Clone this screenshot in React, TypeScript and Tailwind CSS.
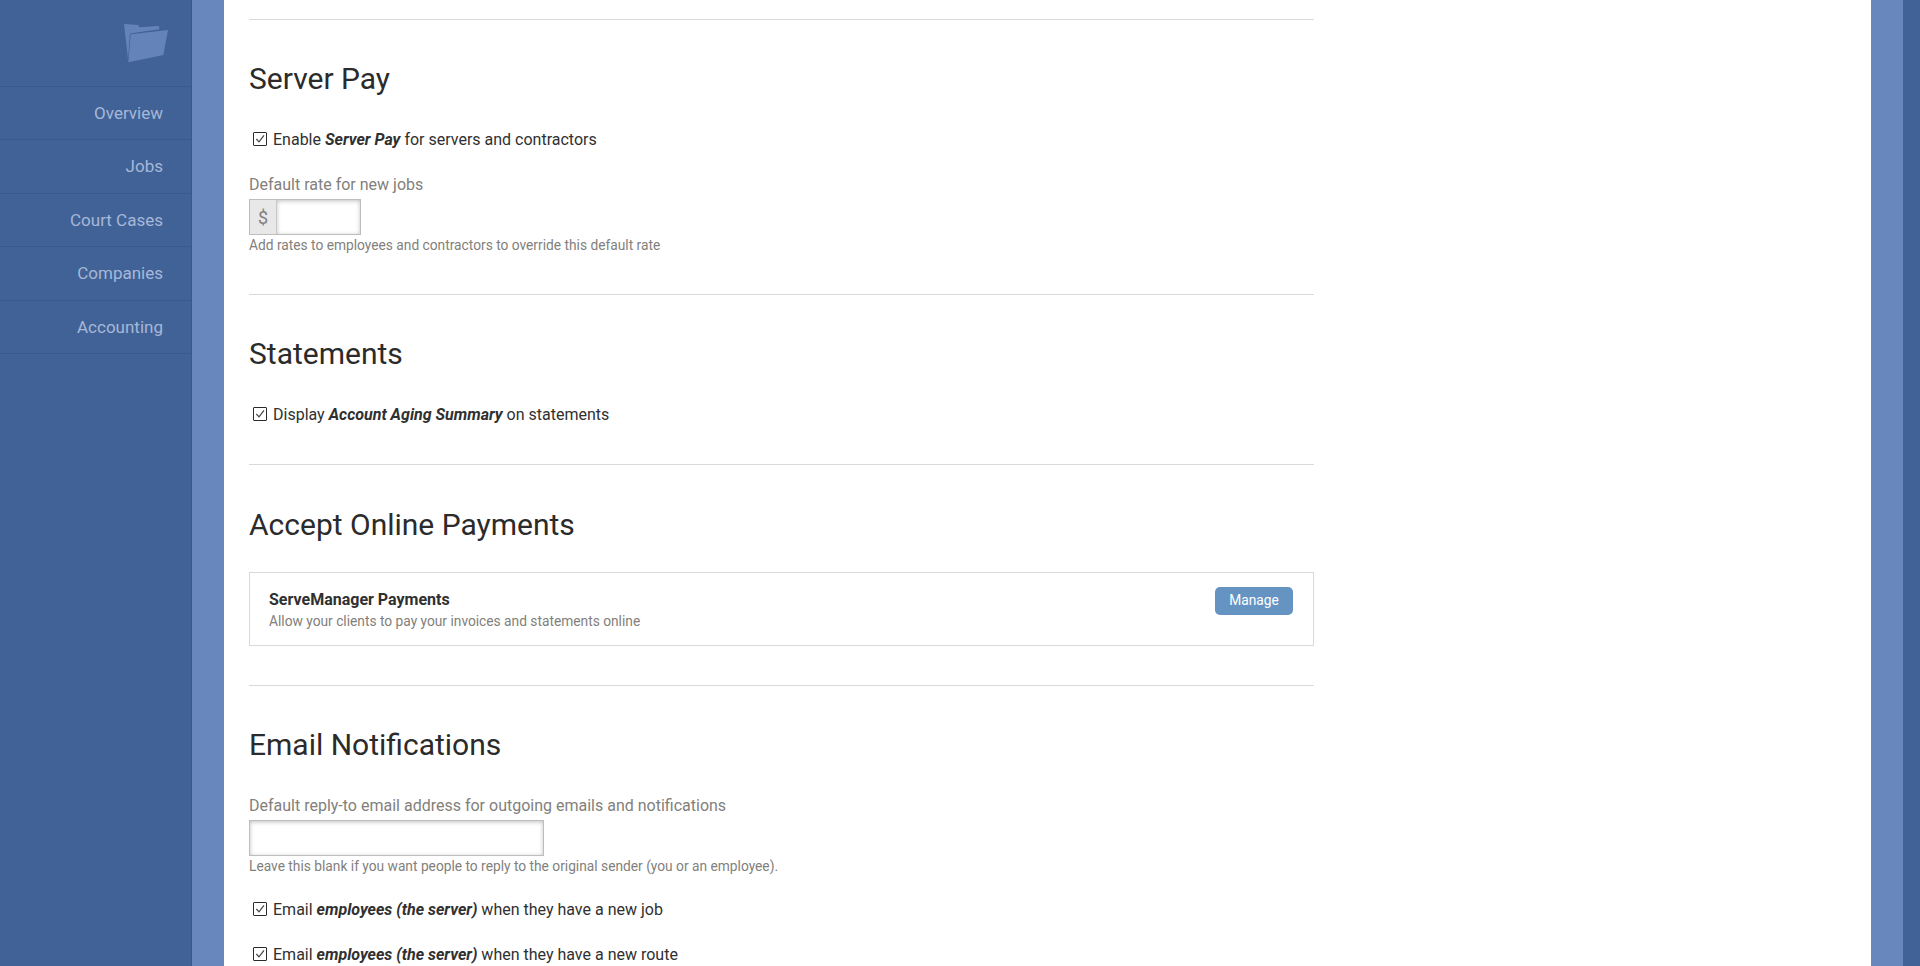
const font = { fontFamily: "Roboto, 'Liberation Sans', sans-serif" }

const navItems = ["Overview", "Jobs", "Court Cases", "Companies", "Accounting"]

function FolderIcon() {
    return (
        <svg width="46" height="42" viewBox="0 0 46 42" className="block">
            <path d="M0 1 L14.300 2 L15.300 4.300 L35 3 L35.300 6.300 L6 10.400 L4 36 Z" fill="#6484b9" />
            <path d="M6.700 11.300 L44 7 L39.300 32 L4.300 39.300 Z" fill="#6484b9" />
        </svg>
    )
}

function CheckIcon() {
    return (
        <svg width="14" height="14" viewBox="0 0 14 14" className="block shrink-0 -mt-[2px]">
            <rect x="0.500" y="0.500" width="13" height="13" rx="0.500" fill="none" stroke="#2b2b2b" strokeWidth="1" />
            <path d="M3.400 7 L6 9.800 L11 3.400" fill="none" stroke="#444444" strokeWidth="1.200" />
        </svg>
    )
}

function CheckRow({ className, children }: { className?: string; children: React.ReactNode }) {
    return (
        <div className={`flex items-center gap-[6px] pl-[4px] h-[20px] text-[16px] text-[#303030] ${className ?? ""}`}>
            <CheckIcon />
            <span>{children}</span>
        </div>
    )
}

function Heading({ className, children }: { className?: string; children: React.ReactNode }) {
    return <h2 className={`text-[30px] leading-[40px] text-[#2b2b2b] font-normal ${className ?? ""}`}>{children}</h2>
}

function Divider({ className }: { className?: string }) {
    return <div className={`h-[1px] bg-[#d9d9d9] ${className ?? ""}`} />
}

export default function App() {
    return (
        <div style={font} className="flex h-[966px] overflow-hidden bg-white">
            <aside className="w-[192px] shrink-0 bg-[#416296] border-r border-[#3a5889]">
                <div className="h-[86px] flex justify-end pt-[23px] pr-[21px]">
                    <FolderIcon />
                </div>
                <nav className="border-t border-[#3a5889]">
                    {navItems.map((item) => (
                        <div key={item} className="h-[53.400px] border-b border-[#3a5889] flex items-center justify-end pr-[28px] pt-[1px] text-[17px] text-[#a6b8d8]">
                            {item}
                        </div>
                    ))}
                </nav>
            </aside>

            <div className="w-[32px] shrink-0 bg-[#6787bd]" />

            <main className="flex-1 bg-white pl-[25px]">
                <div className="w-[1065px] pt-[19px]">
                    <Divider />
                    <Heading className="mt-[39px]">Server Pay</Heading>
                    <CheckRow className="mt-[31px]">
                        Enable <b className="italic font-bold">Server Pay</b> for servers and contractors
                    </CheckRow>
                    <div className="mt-[25px] text-[16px] leading-[20px] text-[#827f7c]">Default rate for new jobs</div>
                    <div className="mt-[4px] flex w-[112px] h-[36px] border border-[#bdbdbd]">
                        <div className="w-[27px] flex items-center justify-center bg-[#e8e8e8] border-r border-[#c8c8c8] text-[18px] text-[#808080]">$</div>
                        <div className="flex-1 bg-white shadow-[inset_0_1px_4px_rgba(0,0,0,0.25)]" />
                    </div>
                    <div className="text-[13.750px] leading-[20px] text-[#827f7c]">Add rates to employees and contractors to override this default rate</div>
                    <Divider className="mt-[39px]" />

                    <Heading className="mt-[39px]">Statements</Heading>
                    <CheckRow className="mt-[31px]">
                        Display <b className="italic font-bold">Account Aging Summary</b> on statements
                    </CheckRow>
                    <Divider className="mt-[39px]" />

                    <Heading className="mt-[40px]">Accept Online Payments</Heading>
                    <div className="mt-[27px] h-[74px] border border-[#d9d9d9] flex justify-between pl-[19px] pr-[20px] pt-[14px]">
                        <div className="pt-[2px]">
                            <div className="text-[16px] leading-[22px] font-bold text-[#303030]">ServeManager Payments</div>
                            <div className="text-[13.750px] leading-[20px] text-[#827f7c]">Allow your clients to pay your invoices and statements online</div>
                        </div>
                        <div className="h-[28px] w-[78px] rounded-[5px] bg-[#6694c2] flex items-center justify-center pb-[1px] text-[13.750px] text-white">Manage</div>
                    </div>
                    <Divider className="mt-[39px]" />

                    <Heading className="mt-[39px]">Email Notifications</Heading>
                    <div className="mt-[31px] text-[16px] leading-[20px] text-[#827f7c]">Default reply-to email address for outgoing emails and notifications</div>
                    <div className="mt-[4px] w-[295px] h-[36px] border border-[#bdbdbd] bg-white shadow-[inset_0_1px_4px_rgba(0,0,0,0.25)]" />
                    <div className="text-[13.750px] leading-[20px] text-[#827f7c]">Leave this blank if you want people to reply to the original sender (you or an employee).</div>
                    <CheckRow className="mt-[24px]">
                        Email <b className="italic font-bold">employees (the server)</b> when they have a new job
                    </CheckRow>
                    <CheckRow className="mt-[25px]">
                        Email <b className="italic font-bold">employees (the server)</b> when they have a new route
                    </CheckRow>
                </div>
            </main>

            <div className="w-[32px] shrink-0 bg-[#6787bd]" />
            <div className="w-[17px] shrink-0 bg-[#416296]" />
        </div>
    )
}
